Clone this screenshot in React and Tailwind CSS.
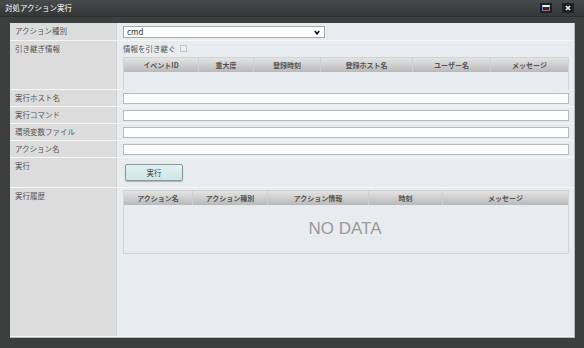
import React from "react";

const font = { fontFamily: '"Noto Sans CJK JP", "Noto Sans", sans-serif' };

function Row({ label, h, children, last }) {
  return (
    <div className={`flex ${last ? "flex-1" : ""} border-b border-[#f4f5f6]`} style={h ? { height: h } : undefined}>
      <div className="w-[107px] shrink-0 bg-[#dddcdc] border-r border-[#cfd0d0] pl-[5px] pt-[3px] text-[7.5px] leading-[10px] text-[#555]">
        {label}
      </div>
      <div className="flex-1 bg-[#e9ecee] pl-[6px] pr-[5px]">{children}</div>
    </div>
  );
}

function Table({ cols, bodyH, children }) {
  return (
    <div className="border border-[#cfd4d6] bg-[#e9ecee]">
      <div className="flex h-[14px] bg-gradient-to-b from-[#e4e4e4] to-[#b9b9b9]">
        {cols.map(([t, w], i) => (
          <div
            key={i}
            className={`flex items-center justify-center text-[7px] font-bold text-[#555] ${i < cols.length - 1 ? "border-r border-[#cfcfcf]" : ""}`}
            style={{ width: w, flex: w ? "none" : 1 }}
          >
            {t}
          </div>
        ))}
      </div>
      <div style={{ height: bodyH }}>{children}</div>
    </div>
  );
}

function Input() {
  return <div className="mt-[3px] h-[11px] bg-white border border-[#b8b8b8]" />;
}

export default function App() {
  return (
    <div className="w-[584px] h-[348px] bg-[#3d3f3f] flex flex-col" style={font}>
      <div className="h-[17px] bg-gradient-to-b from-[#474a4a] to-[#363838] flex items-center justify-between pl-[5px] pr-[10px] border-b border-[#2e3030]">
        <span className="text-[7.5px] text-white leading-none">対処アクション実行</span>
        <div className="flex gap-[10px] items-center">
          <div className="w-[12px] h-[10px] bg-[#1f2121] flex items-center justify-center">
            <div className="w-[8px] h-[6px] border border-[#d05a6a] border-t-[2px] border-t-[#eef0f8] border-l-[#6a7ad0] bg-[#2a2c2c]" />
          </div>
          <div className="w-[12px] h-[10px] bg-[#1f2121] flex items-center justify-center">
            <svg width="6" height="6" viewBox="0 0 6 6"><path d="M1 1 L5 5 M5 1 L1 5" stroke="#eef0f6" strokeWidth="1.6" /></svg>
          </div>
        </div>
      </div>
      <div className="flex-1 pt-[6px] pl-[10px] pr-[9px] pb-[10px] flex">
        <div className="flex-1 flex flex-col border-r border-b border-[#b5b8b8]">
          <Row label="アクション種別" h={18}>
            <div className="mt-[3px] w-[202px] h-[12px] bg-white border border-[#a8a8a8] flex items-center justify-between pl-[3px] pr-[4px]">
              <span className="text-[8px] text-[#333] leading-none">cmd</span>
              <svg width="6" height="5" viewBox="0 0 6 5"><path d="M0.8 1 L3 3.8 L5.2 1" fill="none" stroke="#111" strokeWidth="1.6" /></svg>
            </div>
          </Row>
          <Row label="引き継ぎ情報" h={49}>
            <div className="flex items-center gap-[4px] mt-[3px] h-[9px]">
              <span className="text-[7.5px] text-[#555] leading-none">情報を引き継ぐ</span>
              <div className="w-[7px] h-[7px] border border-[#c8c8c8] bg-[#eeeeee]" />
            </div>
            <div className="mt-[4px]">
              <Table
                bodyH={19}
                cols={[
                  ["イベントID", 75],
                  ["重大度", 55],
                  ["登録時刻", 67],
                  ["登録ホスト名", 92],
                  ["ユーザー名", 78],
                  ["メッセージ", 0],
                ]}
              />
            </div>
          </Row>
          <Row label="実行ホスト名" h={17}><Input /></Row>
          <Row label="実行コマンド" h={17}><Input /></Row>
          <Row label="環境変数ファイル" h={17}><Input /></Row>
          <Row label="アクション名" h={17}><Input /></Row>
          <Row label="実行" h={30}>
            <div className="mt-[6px] ml-[2px] w-[58px] h-[17px] rounded-[2px] border border-[#8f9696] bg-gradient-to-b from-[#e0f1f2] to-[#cfe6e8] shadow-[0_1px_1px_rgba(0,0,0,0.25)] flex items-center justify-center text-[7.5px] text-[#444]">
              実行
            </div>
          </Row>
          <Row label="実行履歴" last>
            <div className="mt-[2px]">
              <Table
                bodyH={48}
                cols={[
                  ["アクション名", 69],
                  ["アクション種別", 75],
                  ["アクション情報", 101],
                  ["時刻", 74],
                  ["メッセージ", 0],
                ]}
              >
                <div className="h-full flex items-center justify-center text-[17px] text-[#9a9a9a] pr-[2px]" style={{ fontFamily: '"Liberation Sans", Arial, sans-serif' }}>
                  NO DATA
                </div>
              </Table>
            </div>
          </Row>
        </div>
      </div>
    </div>
  );
}
